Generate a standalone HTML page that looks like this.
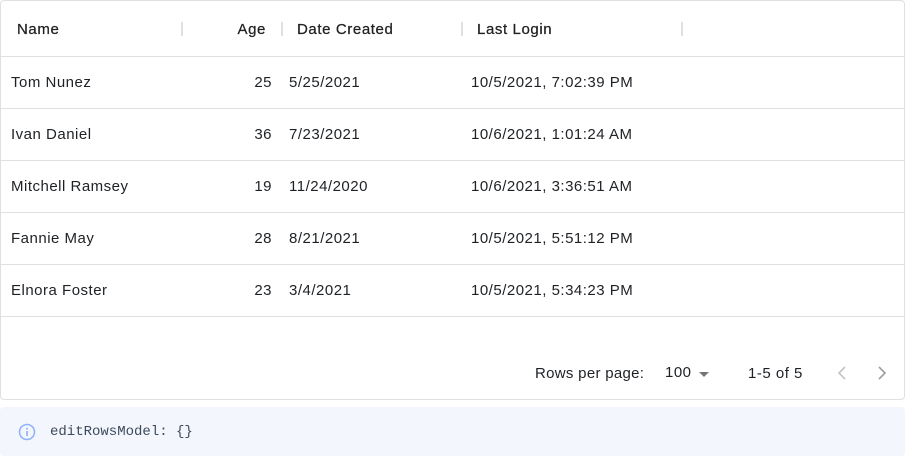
<!DOCTYPE html>
<html><head><style>
body{margin:0;width:905px;height:456px;background:#fff;font-family:"Liberation Sans",sans-serif;color:#1e2125;position:relative;overflow:hidden}
.grid{position:absolute;left:0;top:0;width:903px;height:398px;border:1px solid #e0e0e0;border-radius:4px}
.hdr{position:absolute;left:0;top:0;width:903px;height:55px;border-bottom:1px solid #e0e0e0}
.t{position:absolute;font-size:15px;white-space:nowrap;line-height:18px;letter-spacing:0.5px}
.h{font-size:15px;color:#222;letter-spacing:0.6px;-webkit-text-stroke:0.25px #222}
.sep{position:absolute;top:21px;width:2px;height:14px;background:#e0e0e0}
.row{position:absolute;left:0;width:903px;height:51px;border-bottom:1px solid #e0e0e0}
.row .t{top:17px}
.info{position:absolute;left:0;top:407px;width:905px;height:49px;background:#f3f6fd;border-radius:4px}
</style></head><body>
<div class="grid">
<div class="hdr">
<span class="t h" style="left:16px;top:20px">Name</span>
<span class="sep" style="left:180px"></span>
<span class="t h" style="right:638px;top:20px">Age</span>
<span class="sep" style="left:280px"></span>
<span class="t h" style="left:296px;top:20px">Date Created</span>
<span class="sep" style="left:460px"></span>
<span class="t h" style="left:476px;top:20px">Last Login</span>
<span class="sep" style="left:680px"></span>
</div>
<div class="row" style="top:56px"><span class="t" style="left:10px">Tom Nunez</span><span class="t" style="right:632px">25</span><span class="t" style="left:288px">5/25/2021</span><span class="t" style="left:470px">10/5/2021, 7:02:39 PM</span></div>
<div class="row" style="top:108px"><span class="t" style="left:10px">Ivan Daniel</span><span class="t" style="right:632px">36</span><span class="t" style="left:288px">7/23/2021</span><span class="t" style="left:470px">10/6/2021, 1:01:24 AM</span></div>
<div class="row" style="top:160px"><span class="t" style="left:10px">Mitchell Ramsey</span><span class="t" style="right:632px">19</span><span class="t" style="left:288px">11/24/2020</span><span class="t" style="left:470px">10/6/2021, 3:36:51 AM</span></div>
<div class="row" style="top:212px"><span class="t" style="left:10px">Fannie May</span><span class="t" style="right:632px">28</span><span class="t" style="left:288px">8/21/2021</span><span class="t" style="left:470px">10/5/2021, 5:51:12 PM</span></div>
<div class="row" style="top:264px"><span class="t" style="left:10px">Elnora Foster</span><span class="t" style="right:632px">23</span><span class="t" style="left:288px">3/4/2021</span><span class="t" style="left:470px">10/5/2021, 5:34:23 PM</span></div>
<span class="t" style="left:534px;top:364px;letter-spacing:0.3px">Rows per page:</span>
<span class="t" style="left:664px;top:363px">100</span>
<svg style="position:absolute;left:697px;top:370px" width="12" height="6"><path d="M1 1h10L6 6z" fill="#757575"/></svg>
<span class="t" style="left:747px;top:364px">1-5 of 5</span>
<svg style="position:absolute;left:836px;top:365px" width="10" height="14"><path d="M8 1L2 7l6 6" stroke="#c4c4c4" stroke-width="1.6" fill="none"/></svg>
<svg style="position:absolute;left:876px;top:365px" width="10" height="14"><path d="M2 1l6 6-6 6" stroke="#9e9e9e" stroke-width="1.6" fill="none"/></svg>
</div>
<div class="info">
<svg style="position:absolute;left:18px;top:16px" width="18" height="18"><circle cx="9" cy="9" r="7.5" stroke="#90b4f9" stroke-width="1.6" fill="none"/><rect x="8.2" y="8" width="1.7" height="5" fill="#90b4f9"/><rect x="8.2" y="4.8" width="1.7" height="1.8" fill="#90b4f9"/></svg>
<span class="t" style="left:50px;top:16px;font-family:'Liberation Mono',monospace;font-size:14px;color:#3e4a5c;letter-spacing:0">editRowsModel: {}</span>
</div>
</body></html>
